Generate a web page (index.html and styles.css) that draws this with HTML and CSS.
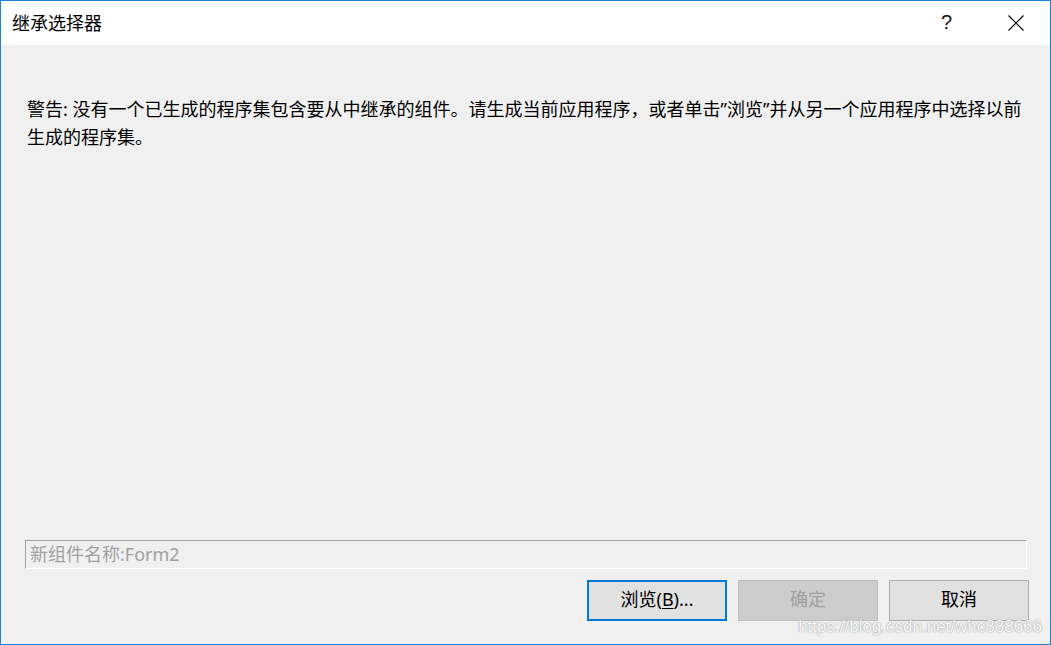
FILE: index.html
```html
<!DOCTYPE html>
<html lang="zh-CN">
<head>
<meta charset="utf-8">
<title>继承选择器</title>
<link rel="stylesheet" href="styles.css">
</head>
<body>
<div class="window">
  <div class="titlebar">
    <div class="title">继承选择器</div>
    <div class="controls">
      <div class="ctrl help">?</div>
      <div class="ctrl close">
        <svg width="16" height="16" viewBox="0 0 16 16"><path d="M0.5 0.5 L15.5 15.5 M15.5 0.5 L0.5 15.5" stroke="#000" stroke-width="1.1" fill="none"/></svg>
      </div>
    </div>
  </div>
  <div class="body">
    <p class="message">警告: 没有一个已生成的程序集包含要从中继承的组件。请生成当前应用程序，或者单击”浏览”并从另一个应用程序中选择以前生成的程序集。</p>
    <div class="namebox">新组件名称:Form2</div>
    <div class="buttons">
      <button class="btn default">浏览(<u>B</u>)...</button>
      <button class="btn disabled">确定</button>
      <button class="btn">取消</button>
    </div>
    <div class="watermark">https://blog.csdn.net/whc888666</div>
  </div>
</div>
</body>
</html>
```
FILE: styles.css
```css
html, body {
  margin: 0;
  padding: 0;
  background: #f0f0f0;
}
body {
  font-family: "Noto Sans", "Noto Sans CJK SC", sans-serif;
  font-size: 18px;
  color: #000;
}
.window {
  width: 1051px;
  height: 645px;
  box-sizing: border-box;
  border: 1px solid #1883d7;
  display: flex;
  flex-direction: column;
  background: #f0f0f0;
}
.titlebar {
  height: 44px;
  background: #fff;
  display: flex;
  align-items: center;
  justify-content: space-between;
}
.title {
  padding-left: 11px;
  font-size: 18px;
  line-height: 44px;
  margin-top: -1px;
}
.controls {
  display: flex;
  height: 44px;
}
.ctrl {
  width: 69px;
  height: 44px;
  display: flex;
  align-items: center;
  justify-content: center;
}
.help {
  font-family: "Liberation Sans", sans-serif;
  font-size: 20px;
  margin-top: -1px;
  color: #111;
}
.close svg {
  display: block;
  margin-top: -1px;
}
.body {
  flex: 1;
  display: flex;
  flex-direction: column;
  position: relative;
  padding: 0 21px 23px 24px;
}
.message {
  margin: 50px 0 0 2px;
  line-height: 28px;
}
.namebox {
  margin-top: auto;
  width: 1002px;
  height: 29px;
  box-sizing: border-box;
  border-top: 1px solid #a0a0a0;
  border-left: 1px solid #a0a0a0;
  border-right: 1px solid #fff;
  border-bottom: 1px solid #fff;
  color: #a0a0a0;
  line-height: 26px;
  padding-left: 4px;
}
.buttons {
  margin-top: 11px;
  display: flex;
  justify-content: flex-end;
  gap: 11px;
}
.btn {
  width: 140px;
  height: 41px;
  box-sizing: border-box;
  background: #e1e1e1;
  border: 1px solid #adadad;
  font-family: inherit;
  font-size: 18px;
  color: #000;
  padding: 0 0 3px 0;
  line-height: 1;
}
.btn.default {
  border: 2px solid #0078d7;
}
.btn.disabled {
  background: #cccccc;
  border-color: #bfbfbf;
  color: #a0a0a0;
}
.btn u {
  text-underline-offset: 2px;
}
.watermark {
  position: absolute;
  right: 8px;
  bottom: 7px;
  font-family: "Liberation Sans", Arial, sans-serif;
  font-size: 17px;
  color: rgba(255, 255, 255, 0.95);
  text-shadow: 0 0 1px rgba(140, 140, 140, 0.9), 0 0 2px rgba(160, 160, 160, 0.5);
}
```
